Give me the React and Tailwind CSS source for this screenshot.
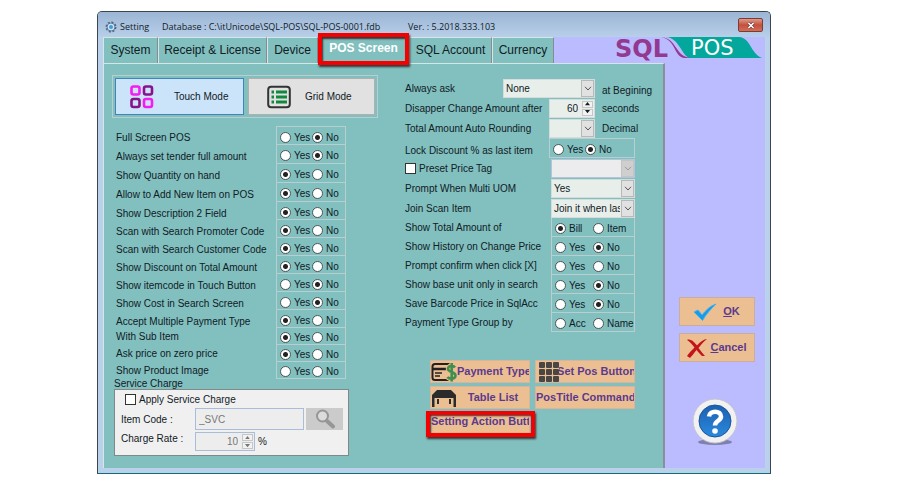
import { useState } from 'react';

const leftRows = [
  ['Full Screen POS', 'No', 'h-[19px]'],
  ['Always set tender full amount', 'No', 'h-[19px]'],
  ['Show Quantity on hand', 'Yes', 'h-[19px]'],
  ['Allow to Add New Item on POS', 'Yes', 'h-[19px]'],
  ['Show Description 2 Field', 'Yes', 'h-[18px]'],
  ['Scan with Search Promoter Code', 'Yes', 'h-[18px]'],
  ['Scan with Search Customer Code', 'Yes', 'h-[18px]'],
  ['Show Discount on Total Amount', 'Yes', 'h-[18px]'],
  ['Show itemcode in Touch Button', 'No', 'h-[18px]'],
  ['Show Cost in Search Screen', 'No', 'h-[18px]'],
  ['Accept Multiple Payment Type', 'Yes', 'h-[18px]'],
  ['With Sub Item', 'Yes', 'h-[17px]'],
  ['Ask price on zero price', 'Yes', 'h-[17px]'],
  ['Show Product Image', '', 'h-[17px]'],
];

const rightRadios = [
  ['Show Total Amount of', ['Bill', 'Item'], 'Bill'],
  ['Show History on Change Price', ['Yes', 'No'], 'No'],
  ['Prompt confirm when click [X]', ['Yes', 'No'], ''],
  ['Show base unit only in search', ['Yes', 'No'], 'No'],
  ['Save Barcode Price in SqlAcc', ['Yes', 'No'], 'No'],
  ['Payment Type Group by', ['Acc', 'Name'], ''],
];

function Radio({ name, label, checked, onChange, wide }) {
  return (
    <label className={`flex items-center whitespace-nowrap gap-[3px] ${wide ? 'w-[38px]' : 'w-8'}`}>
      <input
        type="radio"
        name={name}
        checked={checked}
        onChange={onChange}
        className="size-[11px] shrink-0 appearance-none rounded-full border border-[#4a5555] bg-white checked:bg-[radial-gradient(circle,#222_0_2px,#fff_3px)]"
      />
      {label}
    </label>
  );
}

function RadioGroup({ name, options, value, wide }) {
  const [current, setCurrent] = useState(value);
  return (
    <div
      role="radiogroup"
      aria-label={name}
      className="flex h-full w-full items-center border-x border-b border-[#b9cfcf] pl-[3px] pt-[3px]"
    >
      {options.map((o) => (
        <Radio key={o} name={name} label={o} wide={wide} checked={current === o} onChange={() => setCurrent(o)} />
      ))}
    </div>
  );
}

function Select({ label, options, disabled }) {
  return (
    <div className="relative h-[19px] w-full">
      <select
        aria-label={label}
        disabled={disabled}
        className={`h-full w-full appearance-none border pl-[2px] pr-[14px] text-[10px] opacity-100 ${
          disabled ? 'border-[#b4c4da] bg-[#ececee]' : 'border-[#d5dcdc] bg-[#e8efea]'
        }`}
      >
        {options.map((o) => (
          <option key={o}>{o}</option>
        ))}
      </select>
      <span
        className={`pointer-events-none absolute inset-y-px right-px flex w-[13px] items-center justify-center border ${
          disabled ? 'border-[#c4c4c4] bg-[#cfcfcf] text-[#9a9a9a]' : 'border-[#b8b8b8] bg-[#e1e1e1] text-[#555]'
        }`}
      >
        <svg viewBox="0 0 8 5" className="w-2" fill="none" stroke="currentColor">
          <path d="M1 .8 4 4 7 .8" />
        </svg>
      </span>
    </div>
  );
}

function Spin({ id, value, disabled }) {
  return (
    <div
      className={`relative h-[19px] w-full border ${
        disabled ? 'border-[#a9bdd8] bg-[#ededed] text-[#777]' : 'border-[#d5dcdc] bg-[#e8efea]'
      }`}
    >
      <input
        id={id}
        aria-label={id}
        defaultValue={value}
        disabled={disabled}
        className="h-full w-full bg-transparent pr-4 text-right text-[10px]"
      />
      <span className="absolute inset-y-px right-px flex w-[11px] flex-col gap-px">
        {['M0 4 3 0 6 4Z', 'M0 0 3 4 6 0Z'].map((d) => (
          <span key={d} className="flex flex-1 items-center justify-center border border-[#c6c6c6] bg-[#f2f2f2]">
            <svg viewBox="0 0 6 4" className="w-[5px]" fill="currentColor">
              <path d={d} />
            </svg>
          </span>
        ))}
      </span>
    </div>
  );
}

function Gear() {
  return (
    <svg viewBox="0 0 24 24" className="size-3">
      <circle cx="12" cy="12" r="9" fill="#dbe9f6" stroke="#4b6480" strokeWidth="4" strokeDasharray="4 3" />
      <circle cx="12" cy="12" r="8" fill="#cfe2f4" stroke="#5d7894" strokeWidth="2" />
      <circle cx="12" cy="12" r="4" fill="#3c9be0" />
    </svg>
  );
}

function Logo() {
  return (
    <svg viewBox="0 0 150 22" className="h-[22px] w-[150px] overflow-visible" role="img" aria-label="SQL POS">
      <path d="M51 0H124C136 1 135 16 147 21H74C66 17 64 1 51 0Z" fill="#04a79b" />
      <path d="M46 0C62 1 60 20 76 21H70C58 20 62 3 46 0Z" fill="#93398f" />
      <text x="0" y="20" fill="#93398f" className="font-['DejaVu_Sans'] text-[24px] font-bold">
        SQL
      </text>
      <text x="76" y="18" fill="#fff" className="font-['DejaVu_Sans'] text-[21px]">
        POS
      </text>
    </svg>
  );
}

const tab = 'flex h-[26px] items-center justify-center border-l border-t border-[#d4e6e6] border-r border-r-[#8a8a92] bg-[#82bfbf] text-[12px]';
const action =
  "flex h-[23px] w-full items-center overflow-hidden whitespace-nowrap border border-[#d8b59a] bg-[#ecbf92] text-[11px] font-bold text-[#5b3a8e]";
const dialogButton =
  "flex h-[29px] w-[76px] items-center justify-center border border-[#c9ae9c] bg-[#ecbf92] text-[11px] font-bold text-[#5b3a8e]";

export default function App() {
  return (
    <div className="min-h-screen bg-white pb-3 pl-[97px] pr-[132px] pt-[11px] font-['Liberation_Sans',Arial,sans-serif] text-[10px] leading-[13px] text-[#10201f]">
      <main className="rounded-t-[5px] border border-[#3c4650] border-b-[#156a78] bg-[#b9d1ea] px-[5px] pb-[5px]">
        <header className="-mx-[5px] flex h-[25px] items-center rounded-t-[4px] bg-linear-to-b from-[#9bb5d4] to-[#b8cfe9] pl-[7px] pr-[7px] pt-[4px] font-['Open_Sans',sans-serif] text-[9px]">
          <Gear />
          <h1 className="ml-[3px] w-[42px]">Setting</h1>
          <span className="w-[246px] whitespace-nowrap">Database : C:\itUnicode\SQL-POS\SQL-POS-0001.fdb</span>
          <span className="flex-1 whitespace-nowrap">Ver. : 5.2018.333.103</span>
          <button
            aria-label="Close"
            className="-mt-[3px] flex h-[14px] w-[25px] items-center justify-center rounded-[2px] border border-[#7d3a37] bg-linear-to-b from-[#dc9a8c] via-[#c4503c] to-[#cf7059]"
          >
            <svg viewBox="0 0 8 7" className="w-2">
              <path d="M1.5 1 6.5 6M6.5 1 1.5 6" stroke="#6b3a3a" strokeWidth="3" />
              <path d="M1.5 1 6.5 6M6.5 1 1.5 6" stroke="#fff" strokeWidth="1.6" />
            </svg>
          </button>
        </header>

        <div className="bg-[#bbbbff]">
          <div className="flex h-[26px] justify-between">
            <nav className="flex">
              <button className={`${tab} w-[55px]`}>System</button>
              <button className={`${tab} w-[109px]`}>Receipt &amp; License</button>
              <button className={`${tab} w-[51px]`}>Device</button>
              <button className="relative flex h-[26px] w-[91px] items-center justify-center bg-[#82bfbf] pb-1 text-[12px] font-bold text-white">
                POS Screen
                <span className="pointer-events-none absolute -bottom-[2px] -top-[4px] left-0 right-0 border-4 border-[#f40000] shadow-[1px_2px_2px_#333,inset_1px_2px_2px_#333]" />
              </button>
              <button className={`${tab} w-[83px]`}>SQL Account</button>
              <button className={`${tab} w-[62px]`}>Currency</button>
            </nav>
            <Logo />
          </div>

          <div className="flex">
            <section className="flex flex-1 gap-[27px] border-l border-t border-[#d4e6e6] border-r-2 border-r-[#8a8f9c] bg-[#82bfbf] pb-3 pl-2 pt-[11px]">
              <div className="w-[266px]">
                <div className="flex h-[43px] gap-1 border border-[#b9cfcf] p-[2px]">
                  <button className="flex w-[129px] items-center gap-5 border border-[#3c86b8] bg-[#cce4f9] pl-[14px]">
                    <svg viewBox="0 0 24 24" className="size-6" fill="none" strokeWidth="2.6">
                      <rect x="1.5" y="1.5" width="8" height="8" rx="2" stroke="#f41cf0" />
                      <rect x="14" y="1.5" width="8" height="8" rx="2" stroke="#86138a" />
                      <rect x="1.5" y="14" width="8" height="8" rx="2" stroke="#86138a" />
                      <rect x="14" y="14" width="8" height="8" rx="2" stroke="#f41cf0" />
                    </svg>
                    Touch Mode
                  </button>
                  <button className="flex flex-1 items-center gap-[14px] border border-[#b0b0b0] bg-[#e1e1e1] pl-[18px]">
                    <svg viewBox="0 0 24 24" className="size-6" fill="none">
                      <rect x="1.2" y="1.8" width="21.6" height="20.4" rx="3" stroke="#333" strokeWidth="2" />
                      <path d="M9 7H20M9 12H20M9 17H20M4.500 7h2.500M4.500 12h2.500M4.500 17h2.500" stroke="#10883e" strokeWidth="2.800" />
                    </svg>
                    Grid Mode
                  </button>
                </div>

                <div className="mt-2 pl-1">
                  {leftRows.map(([label, value, height], i) => (
                    <div key={label} className={`flex items-center ${height}`}>
                      <span className={`w-40 whitespace-nowrap ${height === 'h-[17px]' ? '' : 'pt-1'}`}>{label}</span>
                      <div className={`h-full w-[70px] ${i === 0 ? 'border-t border-[#b9cfcf]' : ''}`}>
                        <RadioGroup name={label} options={['Yes', 'No']} value={value} />
                      </div>
                    </div>
                  ))}
                </div>

                <fieldset className="ml-[2px]">
                  <legend className="h-[10px] leading-[10px]">Service Charge</legend>
                  <div className="h-[67px] w-[235px] border border-[#808888] bg-[#f0f0f0] pl-[6px] pt-[3px]">
                    <label className="ml-1 flex items-center gap-[3px]">
                      <input type="checkbox" className="size-[11px] appearance-none border border-[#333] bg-white checked:bg-[#333]" />
                      Apply Service Charge
                    </label>
                    <div className="mt-[2px] flex h-[22px] items-center">
                      <label htmlFor="item-code" className="w-[74px]">
                        Item Code :
                      </label>
                      <input
                        id="item-code"
                        defaultValue="_SVC"
                        disabled
                        className="h-[22px] w-[109px] border border-[#a9bdd8] bg-[#ededed] px-[3px] text-[10px] text-[#777]"
                      />
                      <button aria-label="Find item" className="ml-[2px] flex h-[22px] w-[37px] items-center justify-center bg-[#cbcbcb]">
                        <svg viewBox="0 0 20 20" className="size-5" fill="none">
                          <circle cx="7.500" cy="7" r="5.500" stroke="#969696" strokeWidth="2" fill="#dcdcdc" />
                          <path d="M12 12 18 17.500" stroke="#969696" strokeWidth="4" strokeLinecap="round" />
                        </svg>
                      </button>
                    </div>
                    <div className="mt-[2px] flex items-center">
                      <label htmlFor="Charge Rate" className="w-[74px] self-start">
                        Charge Rate :
                      </label>
                      <div className="mr-[3px] w-[60px]">
                        <Spin id="Charge Rate" value="10" disabled />
                      </div>
                      %
                    </div>
                  </div>
                </fieldset>
              </div>

              <div className="flex-1 pt-[3px]">
                <div className="flex h-5 items-center">
                  <span className="w-[98px]">Always ask</span>
                  <div className="mr-[7px] w-[92px]">
                    <Select label="Always ask" options={['None']} />
                  </div>
                  <span className="whitespace-nowrap pt-1">at Begining</span>
                </div>
                <div className="flex h-5 items-center">
                  <span className="w-36 whitespace-nowrap">Disapper Change Amount after</span>
                  <div className="mr-[7px] w-[46px]">
                    <Spin id="Change amount seconds" value="60" />
                  </div>
                  seconds
                </div>
                <div className="flex h-5 items-center">
                  <span className="w-36 whitespace-nowrap">Total Amount Auto Rounding</span>
                  <div className="mr-[7px] w-[46px]">
                    <Select label="Total Amount Auto Rounding" options={['']} />
                  </div>
                  Decimal
                </div>
                <div className="flex h-5 items-center">
                  <span className="w-36 whitespace-nowrap pt-1">Lock Discount % as last item</span>
                  <div className="h-5 w-[86px] border-t border-[#b9cfcf]">
                    <RadioGroup name="Lock Discount" options={['Yes', 'No']} value="No" />
                  </div>
                </div>
                <div className="flex h-5 items-center">
                  <label className="flex w-[146px] items-center gap-[3px] whitespace-nowrap">
                    <input type="checkbox" className="size-[11px] appearance-none border border-[#333] bg-white checked:bg-[#333]" />
                    Preset Price Tag
                  </label>
                  <div className="w-[84px]">
                    <Select label="Preset Price Tag" options={['']} disabled />
                  </div>
                </div>
                <div className="flex h-5 items-center">
                  <span className="w-[146px]">Prompt When Multi UOM</span>
                  <div className="w-[84px]">
                    <Select label="Prompt When Multi UOM" options={['Yes']} />
                  </div>
                </div>
                <div className="flex h-5 items-center">
                  <span className="w-[146px]">Join Scan Item</span>
                  <div className="w-[84px]">
                    <Select label="Join Scan Item" options={['Join it when last item same']} />
                  </div>
                </div>
                {rightRadios.map(([label, options, value]) => (
                  <div key={label} className="flex h-[19px] items-center">
                    <span className="w-[146px] whitespace-nowrap">{label}</span>
                    <div className="h-full w-[84px]">
                      <RadioGroup name={label} options={options} value={value} wide />
                    </div>
                  </div>
                ))}

                <div className="ml-[25px] mt-7 grid w-[205px] grid-cols-2 gap-x-[5px] gap-y-[3px]">
                  <button className={action}>
                    <svg viewBox="0 0 26 20" className="h-5 w-[26px] shrink-0" fill="none">
                      <rect x="1.500" y="2" width="20" height="16" rx="2.500" stroke="#222" strokeWidth="2" />
                      <path d="M2 7H19" stroke="#222" strokeWidth="2.500" />
                      <path d="M4 11H11M4 14H9" stroke="#222" strokeWidth="1.400" />
                      <path d="M24 5.500C22 3 17 3.500 17 7S24.500 9.500 24.500 13.500 18 17.500 16.500 15M20.700 1V19.500" stroke="#ecbf92" strokeWidth="4.500" />
                      <path d="M24 5.500C22 3 17 3.500 17 7S24.500 9.500 24.500 13.500 18 17.500 16.500 15M20.700 1V19.500" stroke="#3f8f4e" strokeWidth="2.600" />
                    </svg>
                    Payment Type
                  </button>
                  <button className={`${action} pl-[3px]`}>
                    <svg viewBox="0 0 20 20" className="size-5 shrink-0" fill="#4a4644">
                      {[0, 7, 14].map((y) => [0, 7, 14].map((x) => <rect key={`${x}-${y}`} x={x} y={y} width="6" height="6" rx="1" />))}
                    </svg>
                    <span className="flex min-w-0 flex-1 justify-center overflow-hidden">Set Pos Button</span>
                  </button>
                  <button className={action}>
                    <svg viewBox="0 0 26 18" className="h-[18px] w-[26px] shrink-0" fill="#2b2b2b">
                      <path d="M6 1H20L25 6V9H1V6Z" />
                      <path d="M1 9H3.500V18H1ZM22.500 9H25V18H22.500ZM6 10H8V15H6ZM18 10H20V15H18Z" />
                    </svg>
                    <span className="flex-1">Table List</span>
                  </button>
                  <button className={action}>PosTitle Command</button>
                  <div className="relative">
                    <button className={`${action} pb-1`}>Setting Action Butt</button>
                    <span className="pointer-events-none absolute -bottom-[2px] -left-[4px] -right-[5px] -top-[1px] border-4 border-[#f40000] shadow-[1px_2px_2px_#333,inset_1px_1px_2px_#333]" />
                  </div>
                </div>
              </div>
            </section>

            <aside className="flex w-[100px] shrink-0 flex-col items-center justify-end pb-[22px] pl-[3px]">
              <button className={`${dialogButton} gap-[6px]`}>
                <svg viewBox="0 0 24 18" className="h-[18px] w-6">
                  <path d="M1 9 5 7 9 12C13 7 17 3 23 1 18 6 13 11 9.500 17.500Z" fill="#159be8" stroke="#3fb2f2" />
                </svg>
                <span>
                  <u>O</u>K
                </span>
              </button>
              <button className={`${dialogButton} mt-[7px] gap-[2px]`}>
                <svg viewBox="0 0 22 20" className="h-5 w-[22px]">
                  <path d="M1 2C5 0 9 5 11 7.500 14 4 18 1 21 1 17 4 15 7 12.500 10 15 13 17 16 19 18H16C14 16 12 14 10.500 12 8 15 6 18 4 20L1 18C3 15 6 12 8.500 9.500 6 6 4 4 1 2Z" fill="#c3141c" />
                </svg>
                <span>
                  <u>C</u>ancel
                </span>
              </button>
              <button aria-label="Help" className="mr-1 mt-9">
                <svg viewBox="0 0 46 48" className="h-12 w-[46px]">
                  <defs>
                    <linearGradient id="help-blue" x2="0" y2="1">
                      <stop stopColor="#1c5fb0" />
                      <stop offset="1" stopColor="#2b8ade" />
                    </linearGradient>
                  </defs>
                  <ellipse cx="23" cy="44" rx="17" ry="3" fill="#8080ac" />
                  <circle cx="23" cy="23" r="22" fill="#f1f1f1" stroke="#c4c4cf" />
                  <circle cx="23" cy="23" r="16" fill="url(#help-blue)" stroke="#1a5599" />
                  <path d="M17 18.500C17.500 12 29 12 29 18.500 29 23 23 22.500 23 27.500" fill="none" stroke="#fff" strokeWidth="4.500" />
                  <circle cx="23" cy="33" r="2.800" fill="#fff" />
                </svg>
              </button>
            </aside>
          </div>
        </div>
      </main>
    </div>
  );
}
